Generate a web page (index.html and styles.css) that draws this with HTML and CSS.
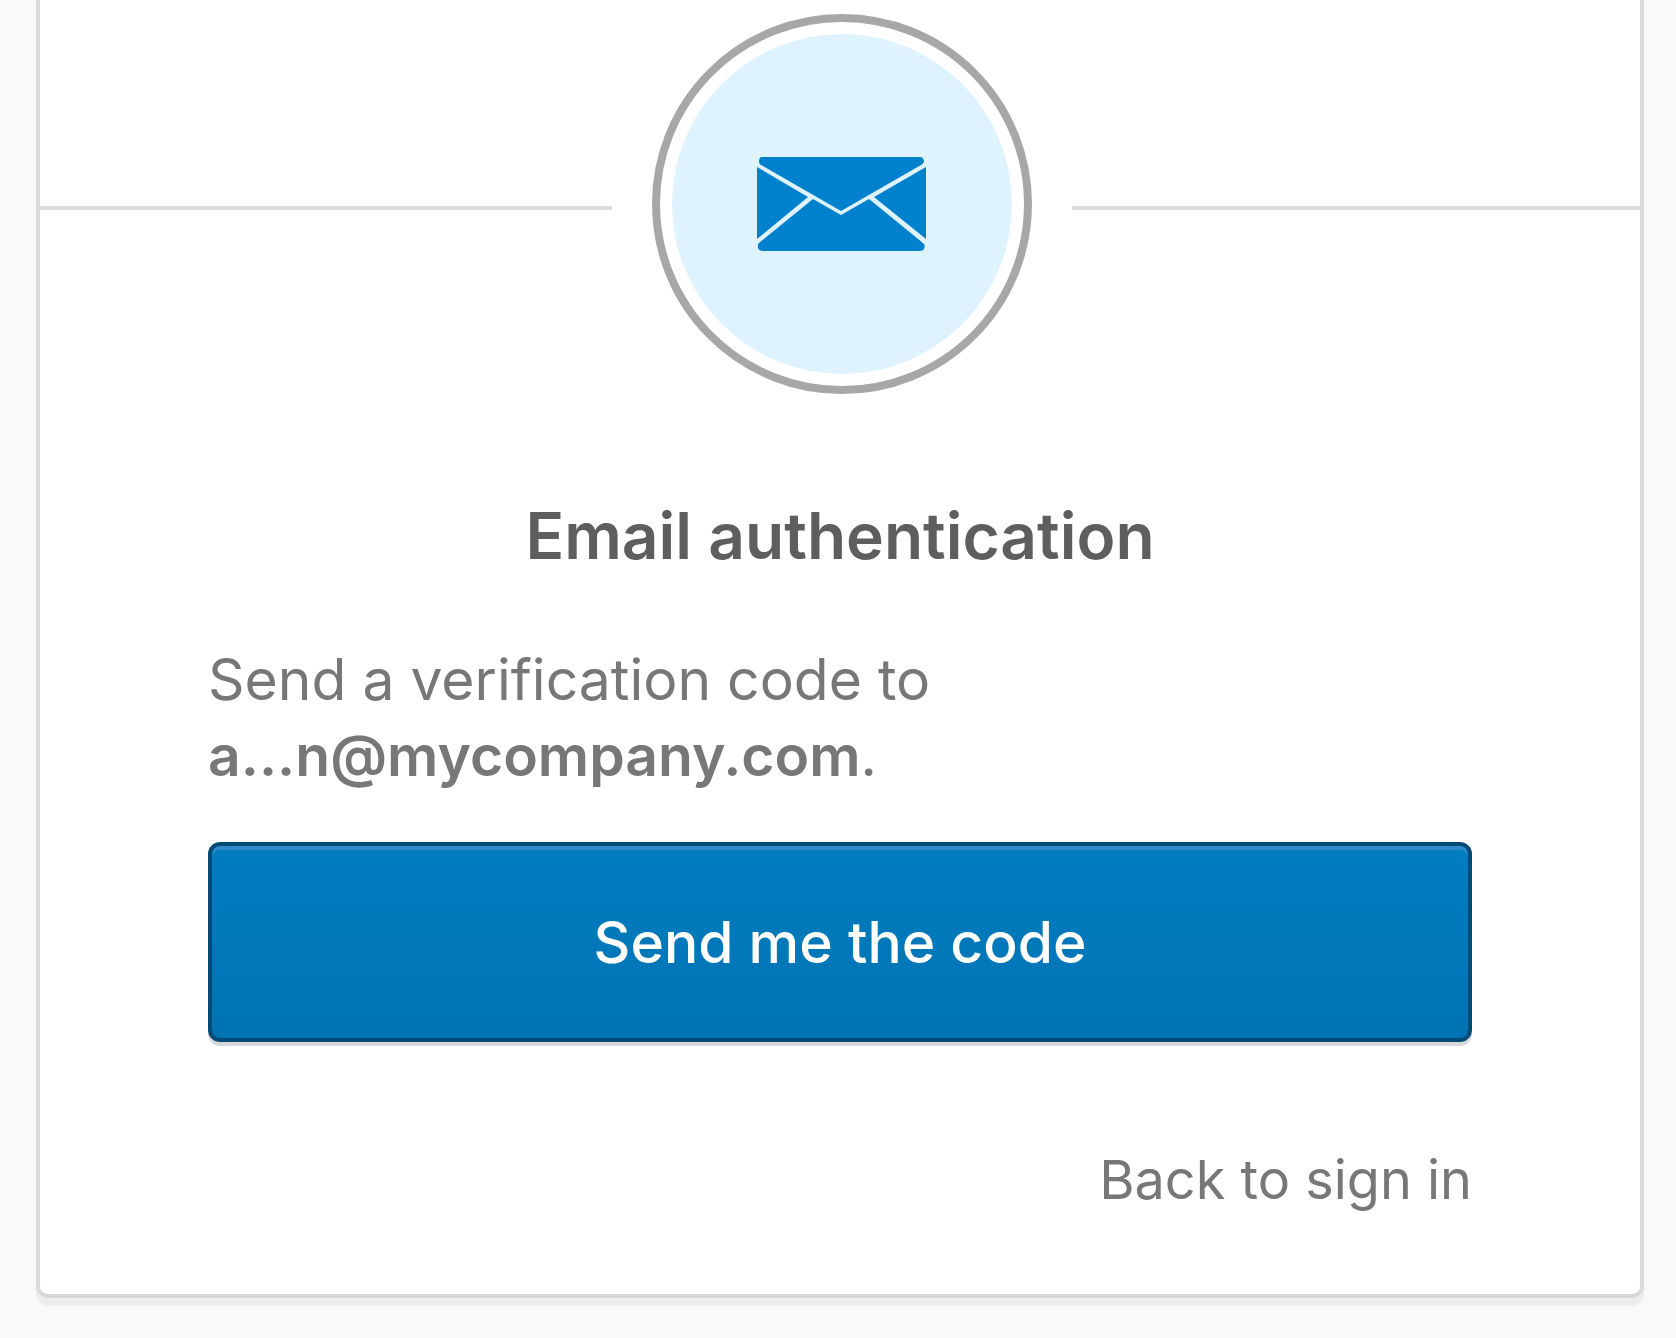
FILE: index.html
```html
<!DOCTYPE html>
<html lang="en">
<head>
    <meta charset="UTF-8">
    <meta name="viewport" content="width=device-width, initial-scale=1.0">
    <title>Email authentication</title>
    <link rel="stylesheet" href="styles.css">
</head>
<body>
    <main class="card">
        <div class="beacon-row">
            <div class="beacon">
                <svg class="envelope" viewBox="0 0 172 94" aria-hidden="true">
                    <path d="M5 0H165Q168 1 168 5Q167 7 165 8L85 54L5 8Q3 7 3 5Q3 1 5 0Z"/>
                    <path d="M1 10L52 40L1 82Z"/>
                    <path d="M170 10L118 40L170 82Z"/>
                    <path d="M57 42L85 58L113 42L167 86Q170 88 168 92Q167 94 164 94H7Q3 94 2 91Q1 87 4 85Z"/>
                </svg>
            </div>
        </div>
        <form class="auth-form" onsubmit="event.preventDefault();">
            <h2>Email authentication</h2>
            <p>Send a verification code to <strong>a...n@mycompany.com</strong>.</p>
            <button type="submit">Send me the code</button>
            <a class="back-link" href="#">Back to sign in</a>
        </form>
    </main>
</body>
</html>
```

FILE: styles.css
```css
body {
    font-family: Inter, sans-serif;
    margin: 0;
    padding: 0 32px 40px 36px;
    background: #f9f9f9;
    color: #777;
}

.card {
    background: white;
    border: 4px solid #dcdcdc;
    border-top: none;
    border-bottom-color: #d6d6d6;
    border-radius: 0 0 12px 12px;
    box-shadow: 0 8px 0 #eee;
    padding: 14px 0 80px;
}

/* horizontal rule broken by the round icon */
.beacon-row {
    display: flex;
    align-items: center;
}

.beacon-row::before,
.beacon-row::after {
    content: "";
    flex: 1;
    height: 4px;
    margin-top: 8px;
    background: #dcdcdc;
}

.beacon-row::before {
    padding-left: 4px;
}

.beacon {
    display: flex;
    align-items: center;
    justify-content: center;
    box-sizing: border-box;
    width: 380px;
    height: 380px;
    margin: 0 40px;
    border: 8px solid #a7a7a7;
    border-radius: 50%;
    padding: 12px;
    background: #dff3ff content-box;
}

.envelope {
    width: 172px;
    height: 94px;
    fill: #0081cd;
}

.auth-form {
    display: flex;
    flex-direction: column;
    padding: 0 168px;
}

h2 {
    margin: 104px 0 68px;
    color: #5e5e5e;
    font-size: 64px;
    font-weight: 600;
    line-height: 76px;
    text-align: center;
}

p {
    margin: 0 0 48px;
    font-size: 57px;
    line-height: 76px;
}

strong {
    font-weight: 600;
}

button {
    height: 200px;
    border: 4px solid #004b75;
    border-radius: 12px;
    background: linear-gradient(#007dc1, #0073b2);
    box-shadow: inset 0 4px 0 #2e8bca, 0 4px 0 #d8d8d8;
    color: white;
    font-family: inherit;
    font-size: 57px;
    font-weight: 500;
    cursor: pointer;
}

.back-link {
    align-self: flex-end;
    margin-top: 104px;
    color: #777;
    font-size: 54px;
    line-height: 68px;
    text-decoration: none;
}
```
